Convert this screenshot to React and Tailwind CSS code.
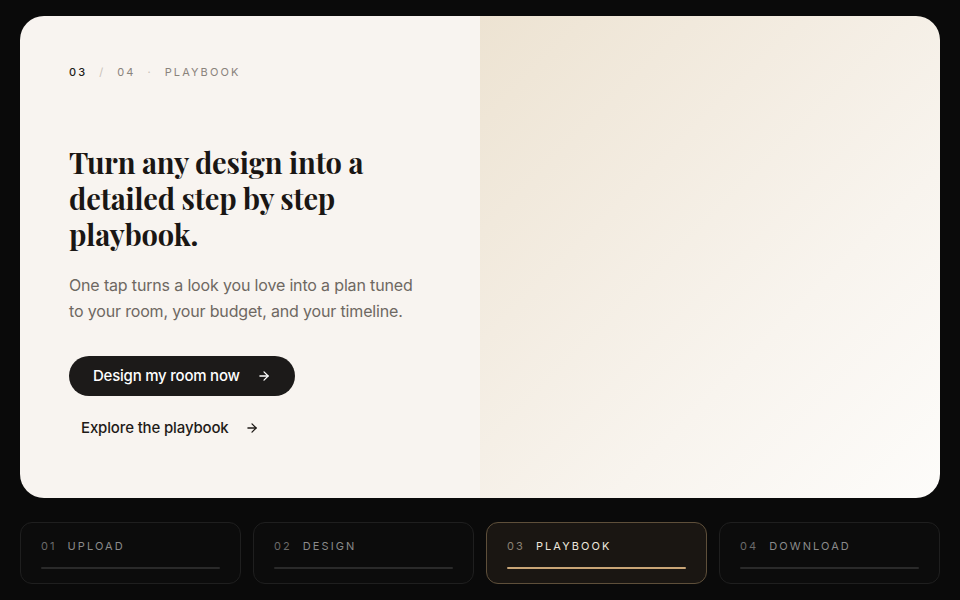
import React from "react";

const steps = [
  { n: "01", label: "UPLOAD" },
  { n: "02", label: "DESIGN" },
  { n: "03", label: "PLAYBOOK", active: true },
  { n: "04", label: "DOWNLOAD" },
];

function Arrow({ className }) {
  return (
    <svg className={className} width="14" height="14" viewBox="0 0 24 24" fill="none" stroke="currentColor" strokeWidth="2.2" strokeLinecap="round" strokeLinejoin="round">
      <path d="M5 12h14" />
      <path d="m12 5 7 7-7 7" />
    </svg>
  );
}

export default function App() {
  return (
    <div className="w-[960px] h-[600px] bg-[#0a0a0a] flex flex-col px-5 pt-4 overflow-hidden" style={{ fontFamily: "Inter, 'Noto Sans', sans-serif" }}>
      <div className="h-[482px] rounded-[24px] overflow-hidden flex">
        <div className="w-[460px] bg-[#f8f4f0] pl-[49px] pt-[49px] flex flex-col">
          <div className="flex items-center gap-[12px] text-[11px] tracking-[0.19em] leading-[14px]">
            <span className="text-[#1f1b18] font-medium">03</span>
            <span className="text-[#c9c1b8]">/</span>
            <span className="text-[#8a837c]">04</span>
            <span className="text-[#c9c1b8]">·</span>
            <span className="text-[#8a837c]">PLAYBOOK</span>
          </div>
          <h1 className="mt-[65px] text-[29px] leading-[36px] font-bold text-[#1a1614] tracking-[-0.005em]" style={{ fontFamily: "'Playfair Display', 'Liberation Serif', 'DejaVu Serif', serif" }}>
            Turn any design into a<br />detailed step by step<br />playbook.
          </h1>
          <p className="mt-[20px] text-[16px] leading-[26px] text-[#6e6862] w-[360px] tracking-[-0.01em]">
            One tap turns a look you love into a plan tuned to your room, your budget, and your timeline.
          </p>
          <div className="mt-[32px] flex">
            <button className="h-[40px] rounded-full bg-[#1c1a19] text-white text-[15px] font-medium pl-[24px] pr-[24px] flex items-center gap-[17px] tracking-[-0.015em]">
              <span>Design my room now</span>
              <Arrow />
            </button>
          </div>
          <div className="mt-[22px] flex">
            <button className="pl-[12px] text-[#1f1b18] text-[15px] font-medium flex items-center gap-[16px] leading-[20px] tracking-[-0.01em]">
              <span>Explore the playbook</span>
              <Arrow />
            </button>
          </div>
        </div>
        <div className="flex-1 bg-[linear-gradient(135deg,#ede3d2_0%,#f3ece1_35%,#f8f4ee_65%,#fdfcfa_100%)]" />
      </div>
      <div className="mt-[24px] grid grid-cols-4 gap-[12px]">
        {steps.map((s) => (
          <div
            key={s.n}
            className={
              s.active
                ? "h-[62px] rounded-[12px] border border-[#5e4f3a] bg-[#1a1612] px-[20px] pt-[16px]"
                : "h-[62px] rounded-[12px] border border-[#1f1f1f] bg-[#0c0c0c] px-[20px] pt-[16px]"
            }
          >
            <div className="flex items-center gap-[11px] text-[11px] tracking-[0.19em] leading-[14px]">
              <span className={s.active ? "text-[#8c8274]" : "text-[#6a6a6a]"}>{s.n}</span>
              <span className={s.active ? "text-[#ece6dc]" : "text-[#8a8a8a]"}>{s.label}</span>
            </div>
            <div className={s.active ? "mt-[14px] h-[2px] bg-[#c9a576] rounded-full" : "mt-[14px] h-[2px] bg-[#2a2a2a] rounded-full"} />
          </div>
        ))}
      </div>
    </div>
  );
}
